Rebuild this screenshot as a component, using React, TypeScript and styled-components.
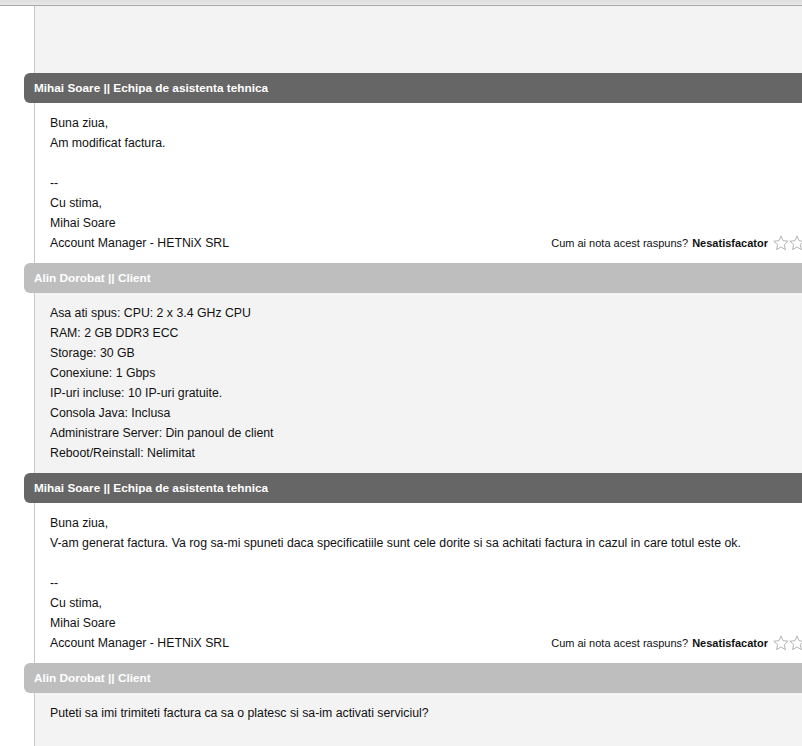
import styled, { createGlobalStyle } from 'styled-components';

const GlobalStyle = createGlobalStyle`
	html, body {
		margin: 0;
		padding: 0;
		overflow: hidden;
		background: #ffffff;
	}
	body {
		font-family: "Liberation Sans", Arial, sans-serif;
		color: #222222;
	}
`;

type Message = {
	author: string;
	role: 'staff' | 'client';
	lines: string[];
	signature?: string;
};

const messages: Message[] = [
	{
		author: 'Mihai Soare || Echipa de asistenta tehnica',
		role: 'staff',
		lines: ['Buna ziua,', 'Am modificat factura.', '', '--', 'Cu stima,', 'Mihai Soare'],
		signature: 'Account Manager - HETNiX SRL',
	},
	{
		author: 'Alin Dorobat || Client',
		role: 'client',
		lines: [
			'Asa ati spus: CPU: 2 x 3.4 GHz CPU',
			'RAM: 2 GB DDR3 ECC',
			'Storage: 30 GB',
			'Conexiune: 1 Gbps',
			'IP-uri incluse: 10 IP-uri gratuite.',
			'Consola Java: Inclusa',
			'Administrare Server: Din panoul de client',
			'Reboot/Reinstall: Nelimitat',
		],
	},
	{
		author: 'Mihai Soare || Echipa de asistenta tehnica',
		role: 'staff',
		lines: [
			'Buna ziua,',
			'V-am generat factura. Va rog sa-mi spuneti daca specificatiile sunt cele dorite si sa achitati factura in cazul in care totul este ok.',
			'',
			'--',
			'Cu stima,',
			'Mihai Soare',
		],
		signature: 'Account Manager - HETNiX SRL',
	},
	{
		author: 'Alin Dorobat || Client',
		role: 'client',
		lines: ['Puteti sa imi trimiteti factura ca sa o platesc si sa-im activati serviciul?'],
	},
];

// wider than the window on purpose: the rating stars run off the right edge
const Page = styled.div`
	width: 858px;
	height: 746px;
	overflow: hidden;
	display: flex;
	flex-direction: column;
`;

const TopStrip = styled.div`
	height: 5px;
	flex-shrink: 0;
	background: linear-gradient(#dedede, #e8e8e8);
	border-bottom: 1px solid #a8a8a8;
`;

const Main = styled.div`
	flex: 1;
	display: flex;
`;

const Gutter = styled.div`
	width: 34px;
	flex-shrink: 0;
	background: #ffffff;
`;

const Thread = styled.div`
	flex: 1;
	border-left: 1px solid #c8c8c8;
	background: #f3f3f3;
	padding-top: 67px;
`;

const Header = styled.div<{ $role: 'staff' | 'client' }>`
	margin-left: -11px;
	height: 30px;
	line-height: 30px;
	padding-left: 10px;
	border-radius: 6px 0 0 6px;
	background: ${p => (p.$role === 'staff' ? '#666666' : '#bebebe')};
	color: #ffffff;
	font-size: 11.8px;
	font-weight: bold;
`;

const Body = styled.div<{ $role: 'staff' | 'client' }>`
	background: ${p => (p.$role === 'staff' ? '#ffffff' : '#f3f3f3')};
	padding: 10px 0 10px 15px;
	font-size: 12.3px;
	line-height: 20px;
	color: #111111;
`;

const Line = styled.div`
	min-height: 20px;
	white-space: nowrap;
`;

const SignatureRow = styled.div`
	display: flex;
	justify-content: space-between;
	align-items: center;
	height: 20px;
`;

const Rating = styled.div`
	display: flex;
	align-items: center;
	font-size: 11px;
	padding-right: 5px;

	b {
		margin-left: 4px;
		margin-right: 5px;
	}
`;

const Stars = styled.span`
	display: inline-flex;
`;

function Star() {
	return (
		<svg width="16" height="16" viewBox="0 0 24 24">
			<polygon
				points="12,1.5 15.1,8.6 22.8,9.3 17,14.4 18.7,22 12,18 5.3,22 7,14.4 1.2,9.3 8.9,8.6"
				fill="#ffffff"
				stroke="#b4b4b4"
				strokeWidth="1.5"
				strokeLinejoin="round"
			/>
		</svg>
	);
}

export default function App() {
	return (
		<>
			<GlobalStyle />
			<Page>
				<TopStrip />
				<Main>
					<Gutter />
					<Thread>
						{messages.map((m, i) => (
							<div key={i}>
								<Header $role={m.role}>{m.author}</Header>
								<Body $role={m.role}>
									{m.lines.map((l, j) => (
										<Line key={j}>{l}</Line>
									))}
									{m.signature && (
										<SignatureRow>
											<span>{m.signature}</span>
											<Rating>
												Cum ai nota acest raspuns? <b>Nesatisfacator</b>
												<Stars>
													{[0, 1, 2, 3, 4].map(s => (
														<Star key={s} />
													))}
												</Stars>
											</Rating>
										</SignatureRow>
									)}
								</Body>
							</div>
						))}
					</Thread>
				</Main>
			</Page>
		</>
	);
}
